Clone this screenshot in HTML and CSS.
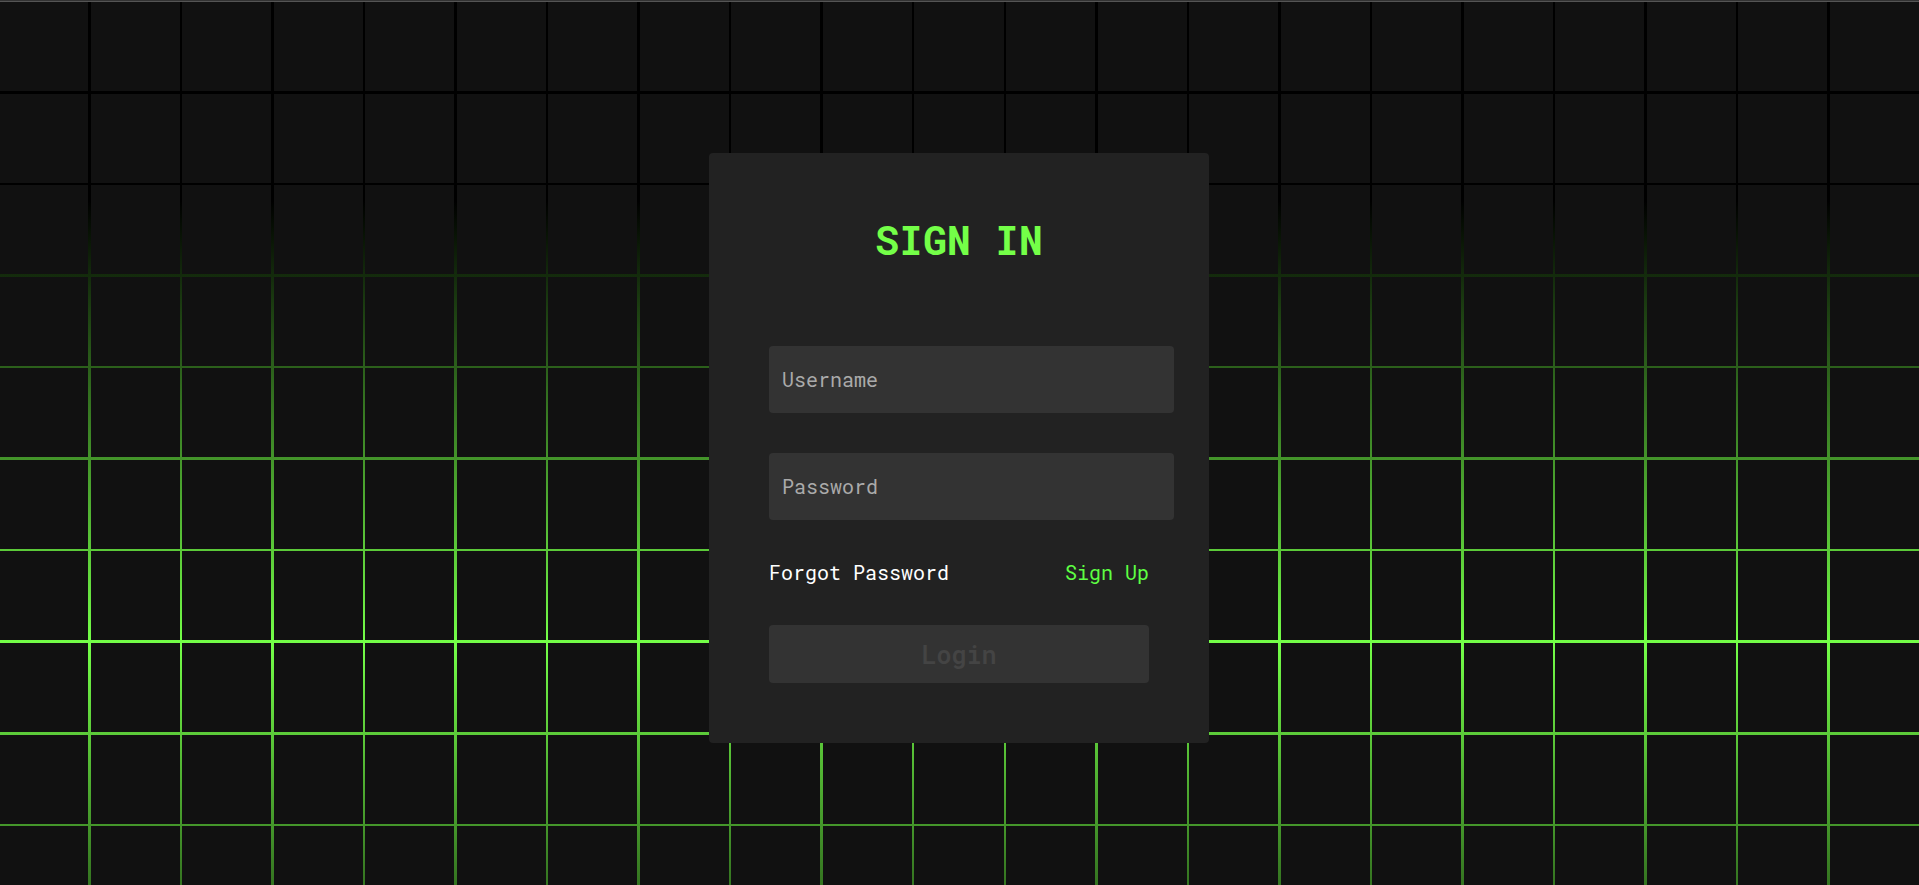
FILE: index.html
```html
<!DOCTYPE html>
<html lang="en">
<head>
<meta charset="utf-8">
<title>Sign In</title>
<meta name="viewport" content="width=device-width, initial-scale=1">
<link rel="stylesheet" href="styles.css">
</head>
<body>
<main class="page">
  <div class="mesh" id="mesh" aria-hidden="true"></div>
  <form class="signin">
    <h1 class="title">SIGN IN</h1>
    <div class="fields">
      <input class="field" type="text" placeholder="Username" aria-label="Username">
      <input class="field" type="password" placeholder="Password" aria-label="Password">
      <div class="links">
        <a class="link" href="#forgot">Forgot Password</a>
        <a class="link link-accent" href="#signup">Sign Up</a>
      </div>
      <button class="login" type="submit" disabled>Login</button>
    </div>
  </form>
</main>
<script src="mesh.js"></script>
</body>
</html>
```
FILE: styles.css
```css
* {
  margin: 0;
  padding: 0;
  box-sizing: border-box;
  font-family: "Roboto Mono", "Liberation Mono", monospace;
}

body {
  background: #000;
}

.page {
  position: relative;
  display: flex;
  justify-content: center;
  align-items: center;
  min-height: 100vh;
  padding: 10px 1px 0 0;
  overflow: hidden;
  border-top: 1px solid #333;
  background: linear-gradient(#000, #74ff48, #000) 0 200px / 100% 100vh no-repeat;
}

/* Dark tiles; the glow behind shows through the gaps */
.mesh {
  position: absolute;
  inset: 0 0 auto -1px;
  display: grid;
  grid-template-columns: repeat(21, 1fr);
  gap: 0.131vw 0.13vw;
  border-top: 1px solid #555;
}

.tile {
  aspect-ratio: 1;
  background: #111;
}

.signin {
  position: relative;
  width: 500px;
  padding: 60px;
  border-radius: 4px;
  background: #222;
}

.title {
  margin-bottom: 80px;
  color: #74ff48;
  font-size: 40px;
  line-height: 53px;
  text-align: center;
}

.fields {
  display: flex;
  flex-direction: column;
}

.field {
  width: calc(100% + 25px);
  height: 67px;
  margin-bottom: 40px;
  padding: 0 13px 2px;
  border: 0;
  border-radius: 4px;
  background: #333;
  color: #fff;
  font-size: 20px;
}

.field::placeholder {
  color: #aaa;
}

.links {
  display: flex;
  justify-content: space-between;
  margin-bottom: 40px;
}

.link {
  color: #fff;
  font-size: 20px;
  line-height: 25px;
  text-decoration: none;
}

.link-accent {
  color: #5eff43;
}

.login {
  height: 58px;
  border: 0;
  border-radius: 4px;
  background: #333;
  color: #444;
  font-size: 25px;
  font-weight: 600;
}
```
FILE: mesh.js
```js
const mesh = document.getElementById("mesh");
const rows = Math.ceil((window.innerHeight * 21) / window.innerWidth) + 1;
for (let i = 0; i < rows * 21; i++) {
  const tile = document.createElement("span");
  tile.className = "tile";
  mesh.append(tile);
}
```
